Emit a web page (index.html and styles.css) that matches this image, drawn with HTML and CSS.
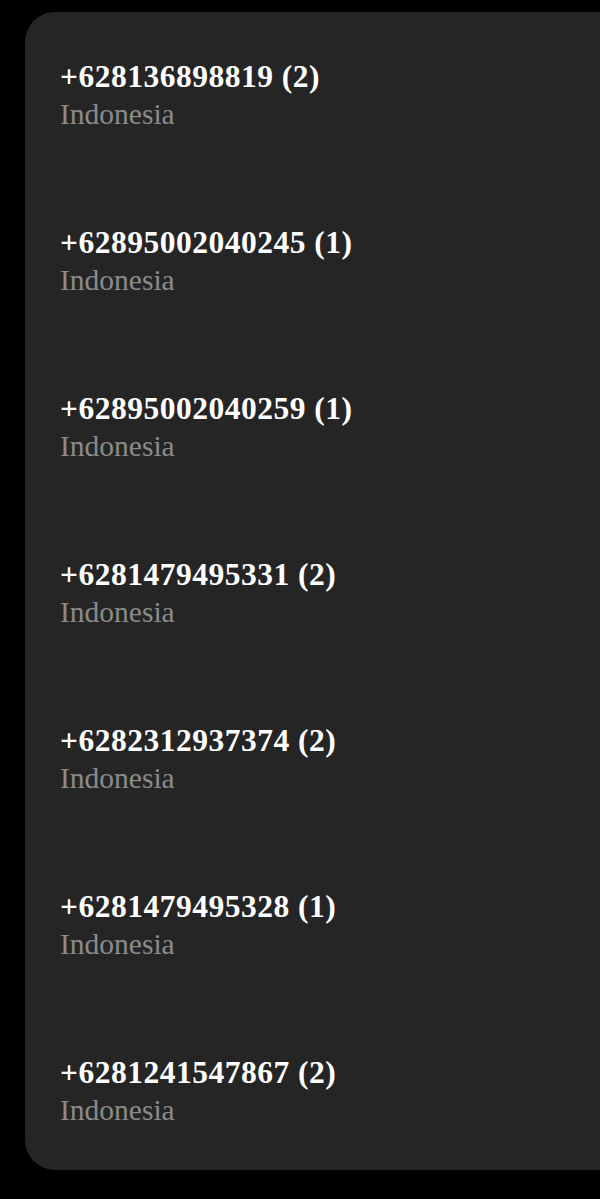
FILE: index.html
```html
<!DOCTYPE html>
<html>
<head>
<meta charset="utf-8">
<link rel="stylesheet" href="styles.css">
</head>
<body>
<div class="card">
  <div class="row"><div class="num">+628136898819 (2)</div><div class="country">Indonesia</div></div>
  <div class="row"><div class="num">+62895002040245 (1)</div><div class="country">Indonesia</div></div>
  <div class="row"><div class="num">+62895002040259 (1)</div><div class="country">Indonesia</div></div>
  <div class="row"><div class="num">+6281479495331 (2)</div><div class="country">Indonesia</div></div>
  <div class="row"><div class="num">+6282312937374 (2)</div><div class="country">Indonesia</div></div>
  <div class="row"><div class="num">+6281479495328 (1)</div><div class="country">Indonesia</div></div>
  <div class="row"><div class="num">+6281241547867 (2)</div><div class="country">Indonesia</div></div>
</div>
</body>
</html>
```
FILE: styles.css
```css
html, body {
  margin: 0;
  padding: 0;
  background: #000;
}
body {
  padding: 12px 0 0 25px;
  height: 1199px;
  box-sizing: border-box;
  overflow: hidden;
}
.card {
  background: #252525;
  border-radius: 30px 0 0 30px;
  height: 1158px;
  box-sizing: border-box;
  padding: 47px 0 0 35px;
  display: flex;
  flex-direction: column;
  gap: 94px;
}
.row {
  display: flex;
  flex-direction: column;
  gap: 2px;
}
.num {
  font-family: "Liberation Serif", serif;
  font-weight: bold;
  font-size: 31.5px;
  letter-spacing: 0.5px;
  line-height: 36px;
  color: #fff;
}
.country {
  font-family: "Liberation Serif", serif;
  font-size: 29.5px;
  line-height: 34px;
  color: #8b8b8b;
}
```
